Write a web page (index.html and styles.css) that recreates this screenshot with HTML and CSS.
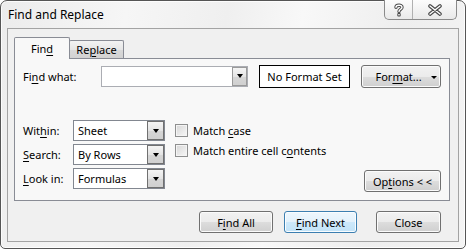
FILE: index.html
```html
<!DOCTYPE html>
<html lang="en">
<head>
    <meta charset="UTF-8">
    <title>Find and Replace</title>
    <link rel="stylesheet" href="styles.css">
</head>
<body>
    <div class="window">
        <div class="titlebar">
            <span class="title">Find and Replace</span>
            <div class="caption">
                <span class="cap cap-help">
                    <svg width="12" height="15" viewBox="0 0 12 15">
                        <path d="M3 5.2 C3 2.8 9 2.3 9 5.2 C9 7.4 6 7.2 6 9.6" fill="none" stroke="#4a4a4a" stroke-width="3.4" stroke-linecap="round"/>
                        <rect x="4.3" y="11" width="3.4" height="3.4" rx="1" fill="#4a4a4a"/>
                        <path d="M3 5.2 C3 2.8 9 2.3 9 5.2 C9 7.4 6 7.2 6 9.6" fill="none" stroke="#fff" stroke-width="1.4" stroke-linecap="round"/>
                        <rect x="5.3" y="12" width="1.4" height="1.4" fill="#fff"/>
                    </svg>
                </span>
                <span class="cap cap-close">
                    <svg width="16" height="12" viewBox="0 0 16 12">
                        <path d="M3 2 L13 10 M13 2 L3 10" stroke="#4a4a4a" stroke-width="3.6" stroke-linecap="round"/>
                        <path d="M3 2 L13 10 M13 2 L3 10" stroke="#fff" stroke-width="1.4" stroke-linecap="round"/>
                    </svg>
                </span>
            </div>
        </div>

        <div class="client">
            <div class="tabs">
                <div class="tab active">Fin<u>d</u></div>
                <div class="tab">Re<u>p</u>lace</div>
            </div>

            <div class="panel">
                <div class="find-row">
                    <label class="find-label">Fi<u>n</u>d what:</label>
                    <div class="combo">
                        <span class="drop"><span class="tri"></span></span>
                    </div>
                    <div class="format-box">No Format Set</div>
                    <button class="btn btn-format">For<u>m</u>at... <span class="tri small"></span></button>
                </div>

                <div class="lower">
                    <div class="fields">
                        <label>Wit<u>h</u>in:</label>
                        <div class="select"><span>Sheet</span><span class="drop"><span class="tri"></span></span></div>
                        <label><u>S</u>earch:</label>
                        <div class="select"><span>By Rows</span><span class="drop"><span class="tri"></span></span></div>
                        <label><u>L</u>ook in:</label>
                        <div class="select"><span>Formulas</span><span class="drop"><span class="tri"></span></span></div>
                    </div>
                    <div class="checks">
                        <div class="check"><span class="box"></span><span>Match <u>c</u>ase</span></div>
                        <div class="check"><span class="box"></span><span>Match entire cell c<u>o</u>ntents</span></div>
                    </div>
                    <button class="btn btn-options">Op<u>t</u>ions &lt; &lt;</button>
                </div>
            </div>

            <div class="actions">
                <button class="btn btn-findall">F<u>i</u>nd All</button>
                <button class="btn btn-default"><u>F</u>ind Next</button>
                <button class="btn btn-close">Close</button>
            </div>
        </div>
    </div>
</body>
</html>
```

FILE: styles.css
```css
* {
    box-sizing: border-box;
}
body {
    margin: 0;
    font-family: "Noto Sans", sans-serif;
    font-size: 11px;
    color: #000;
    background: #fff;
}
u {
    text-underline-offset: 2px;
}
.window {
    width: 466px;
    height: 249px;
    border: 1px solid #555;
    border-radius: 7px 7px 5px 5px;
    padding: 0 6px 6px;
    display: flex;
    flex-direction: column;
    background: linear-gradient(100deg, #ececec 0%, #f6f6f6 25%, #efefef 45%, #f8f8f8 60%, #eeeeee 80%, #f4f4f4 100%);
    box-shadow: inset 0 0 0 1px rgba(255,255,255,0.8);
}
.titlebar {
    height: 27px;
    display: flex;
    justify-content: space-between;
    align-items: flex-start;
}
.title {
    padding: 6px 0 0 1px;
    line-height: 16px;
    font-size: 12px;
}
.caption {
    display: flex;
    height: 20px;
    margin: -1px 2px 0 0;
    border: 1px solid #8a8a8a;
    border-top: none;
    border-radius: 0 0 5px 5px;
    background: linear-gradient(#fcfcfc, #e9e9e9);
    overflow: hidden;
}
.cap {
    display: flex;
    align-items: center;
    justify-content: center;
}
.cap-help {
    width: 28px;
    border-right: 1px solid #b0b0b0;
}
.cap-close {
    width: 43px;
}
.client {
    flex: 1;
    border: 1px solid #a3a3a3;
    background: #f0f0f0;
    padding: 8px 8px 0 6px;
}
.tabs {
    display: flex;
    align-items: flex-end;
    height: 21px;
}
.tab {
    height: 18px;
    width: 55px;
    margin-left: -1px;
    border: 1px solid #898c95;
    border-bottom: none;
    border-radius: 2px 2px 0 0;
    background: linear-gradient(#f3f3f3, #e6e6e6 50%, #d9d9d9 51%, #d2d2d2);
    text-align: center;
    line-height: 17px;
}
.tab.active {
    position: relative;
    z-index: 1;
    height: 22px;
    width: 56px;
    margin-left: 0;
    margin-bottom: -1px;
    background: #f8f8f8;
    line-height: 21px;
}
.panel {
    height: 143px;
    border: 1px solid #898c95;
    background: #f8f8f8;
    padding: 5px 8px 0 8px;
}
.find-row {
    display: flex;
    align-items: center;
    height: 24px;
}
.find-label {
    width: 78px;
}
.combo {
    width: 147px;
    height: 21px;
    border: 1px solid #abadb3;
    background: #fff;
    display: flex;
    justify-content: flex-end;
}
.drop {
    width: 15px;
    height: 100%;
    border: 1px solid #9a9a9a;
    background: linear-gradient(#f4f4f4, #e4e4e4 50%, #d6d6d6 51%, #d0d0d0);
    display: flex;
    align-items: center;
    justify-content: center;
}
.tri {
    width: 0;
    height: 0;
    border-left: 3.5px solid transparent;
    border-right: 3.5px solid transparent;
    border-top: 4px solid #000;
}
.tri.small {
    display: inline-block;
    margin-left: 6px;
    vertical-align: 2px;
    border-left-width: 3px;
    border-right-width: 3px;
    border-top-width: 3px;
}
.format-box {
    width: 91px;
    height: 23px;
    margin-left: 11px;
    border: 1px solid #000;
    background: #fff;
    text-align: center;
    line-height: 21px;
}
.btn {
    font-family: inherit;
    font-size: 11px;
    color: #000;
    height: 22px;
    padding: 0;
    border: 1px solid #707070;
    border-radius: 3px;
    background: linear-gradient(#f2f2f2, #ebebeb 50%, #dddddd 51%, #cfcfcf);
    box-shadow: inset 0 0 0 1px #fbfbfb;
}
.btn-format {
    width: 80px;
    height: 23px;
    margin-left: 11px;
    padding-left: 10px;
}
.lower {
    display: flex;
    align-items: flex-start;
    margin-top: 32px;
}
.fields {
    display: grid;
    grid-template-columns: 50px 92px;
    row-gap: 3px;
    align-items: center;
}
.select {
    height: 21px;
    border: 1px solid #828790;
    background: #fff;
    padding-left: 4px;
    line-height: 19px;
    display: flex;
    justify-content: space-between;
}
.select .drop {
    width: 17px;
    border-color: #707070;
}
.checks {
    margin-left: 10px;
}
.check {
    display: flex;
    align-items: center;
    height: 20px;
}
.box {
    width: 13px;
    height: 13px;
    margin-right: 5px;
    border: 1px solid #8e8f8f;
    background: linear-gradient(135deg, #d6d6d6, #f8f8f8);
    box-shadow: inset 0 0 0 1px #f4f4f4;
}
.btn-options {
    width: 77px;
    height: 22px;
    margin-left: auto;
    margin-top: 50px;
}
.actions {
    display: flex;
    justify-content: flex-end;
    margin: 10px 9px 0 0;
}
.btn-findall {
    width: 74px;
}
.btn-default {
    width: 73px;
    margin-left: 11px;
    border-color: #3c7fb1;
    background: linear-gradient(#eef7fd, #e3f2fc 50%, #cde9fb 51%, #c2e3f8);
    box-shadow: inset 0 0 0 1px #fafdff;
}
.btn-close {
    width: 65px;
    margin-left: 19px;
}
```
